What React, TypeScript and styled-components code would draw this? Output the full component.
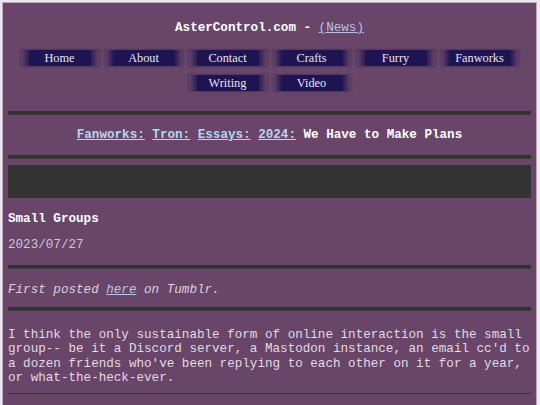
import React from 'react';
import styled, { createGlobalStyle } from 'styled-components';

const GlobalStyle = createGlobalStyle`
  html, body {
    margin: 0;
    padding: 0;
    background: #efe6ef;
  }
  body {
    font-family: "Liberation Mono", "Courier New", monospace;
    font-size: 12.6px;
    line-height: 15px;
    color: #e4dce4;
  }
`;

const Page = styled.div`
  margin: 2px 3px 0 2px;
  border: 1px solid #b9a9b9;
  border-bottom: none;
  background: #684569;
  padding: 0 5px 10px 5px;
  min-height: 420px;
`;

const Header = styled.header`
  padding-top: 18px;
  text-align: center;
  font-weight: bold;
  color: #ffffff;
`;

const NewsLink = styled.a`
  color: #b3c3e6;
  font-weight: normal;
`;

const Nav = styled.nav`
  display: flex;
  flex-wrap: wrap;
  justify-content: center;
  gap: 9px 6px;
  margin: 14px 10px 0;
`;

const NavButton = styled.a`
  width: 78px;
  height: 16px;
  display: flex;
  align-items: center;
  justify-content: center;
  background: linear-gradient(
    90deg,
    rgba(30, 20, 80, 0) 0%,
    #1e1452 12%,
    #1e1452 88%,
    rgba(30, 20, 80, 0) 100%
  );
  box-shadow: 0 0 2px 0 rgba(30, 20, 82, 0.7);
  color: #e9e1f3;
  font-family: "Liberation Serif", "DejaVu Serif", serif;
  font-size: 12.3px;
  text-decoration: none;
`;

const Rule = styled.div<{ $gap: number }>`
  height: 3px;
  background: #323232;
  border-bottom: 1px solid #3c3a3c;
  margin-top: ${({ $gap }) => $gap}px;
`;

const Crumbs = styled.h2`
  margin: 13px 0 0;
  font-size: inherit;
  text-align: center;
  color: #ffffff;
  font-weight: bold;
`;

const CrumbLink = styled.a`
  color: #b8d6ee;
`;

const Banner = styled.div`
  height: 33px;
  margin-top: 6px;
  background: #333333;
`;

const PostTitle = styled.h3`
  margin: 14px 0 0;
  font-size: inherit;
  color: #ffffff;
`;

const PostDate = styled.div`
  margin-top: 11px;
  color: #d2c6d2;
`;

const Note = styled.p`
  margin: 14px 0 0;
  font-style: italic;
  color: #ddd3dd;
`;

const NoteLink = styled.a`
  color: #b3c8e8;
`;

const Body = styled.p`
  margin: 17px 0 0;
  line-height: 14.4px;
  color: #e3dbe3;
`;

const ThinRule = styled.div`
  height: 1px;
  margin-top: 7px;
  background: #3c2f3d;
`;

const navItems = ['Home', 'About', 'Contact', 'Crafts', 'Furry', 'Fanworks', 'Writing', 'Video'];

export default function App() {
  return (
    <>
      <GlobalStyle />
      <Page>
        <Header>
          AsterControl.com - <NewsLink href="#">(News)</NewsLink>
        </Header>
        <Nav>
          {navItems.map((item) => (
            <NavButton key={item} href="#">
              {item}
            </NavButton>
          ))}
        </Nav>
        <Rule $gap={20} />
        <Crumbs>
          <CrumbLink href="#">Fanworks:</CrumbLink> <CrumbLink href="#">Tron:</CrumbLink>{' '}
          <CrumbLink href="#">Essays:</CrumbLink> <CrumbLink href="#">2024:</CrumbLink> We Have to
          Make Plans
        </Crumbs>
        <Rule $gap={12} />
        <Banner />
        <PostTitle>Small Groups</PostTitle>
        <PostDate>2023/07/27</PostDate>
        <Rule $gap={12} />
        <Note>
          First posted <NoteLink href="#">here</NoteLink> on Tumblr.
        </Note>
        <Rule $gap={9} />
        <Body>
          I think the only sustainable form of online interaction is the small group-- be it a
          Discord server, a Mastodon instance, an email cc'd to a dozen friends who've been
          replying to each other on it for a year, or what-the-heck-ever.
        </Body>
        <ThinRule />
      </Page>
    </>
  );
}
